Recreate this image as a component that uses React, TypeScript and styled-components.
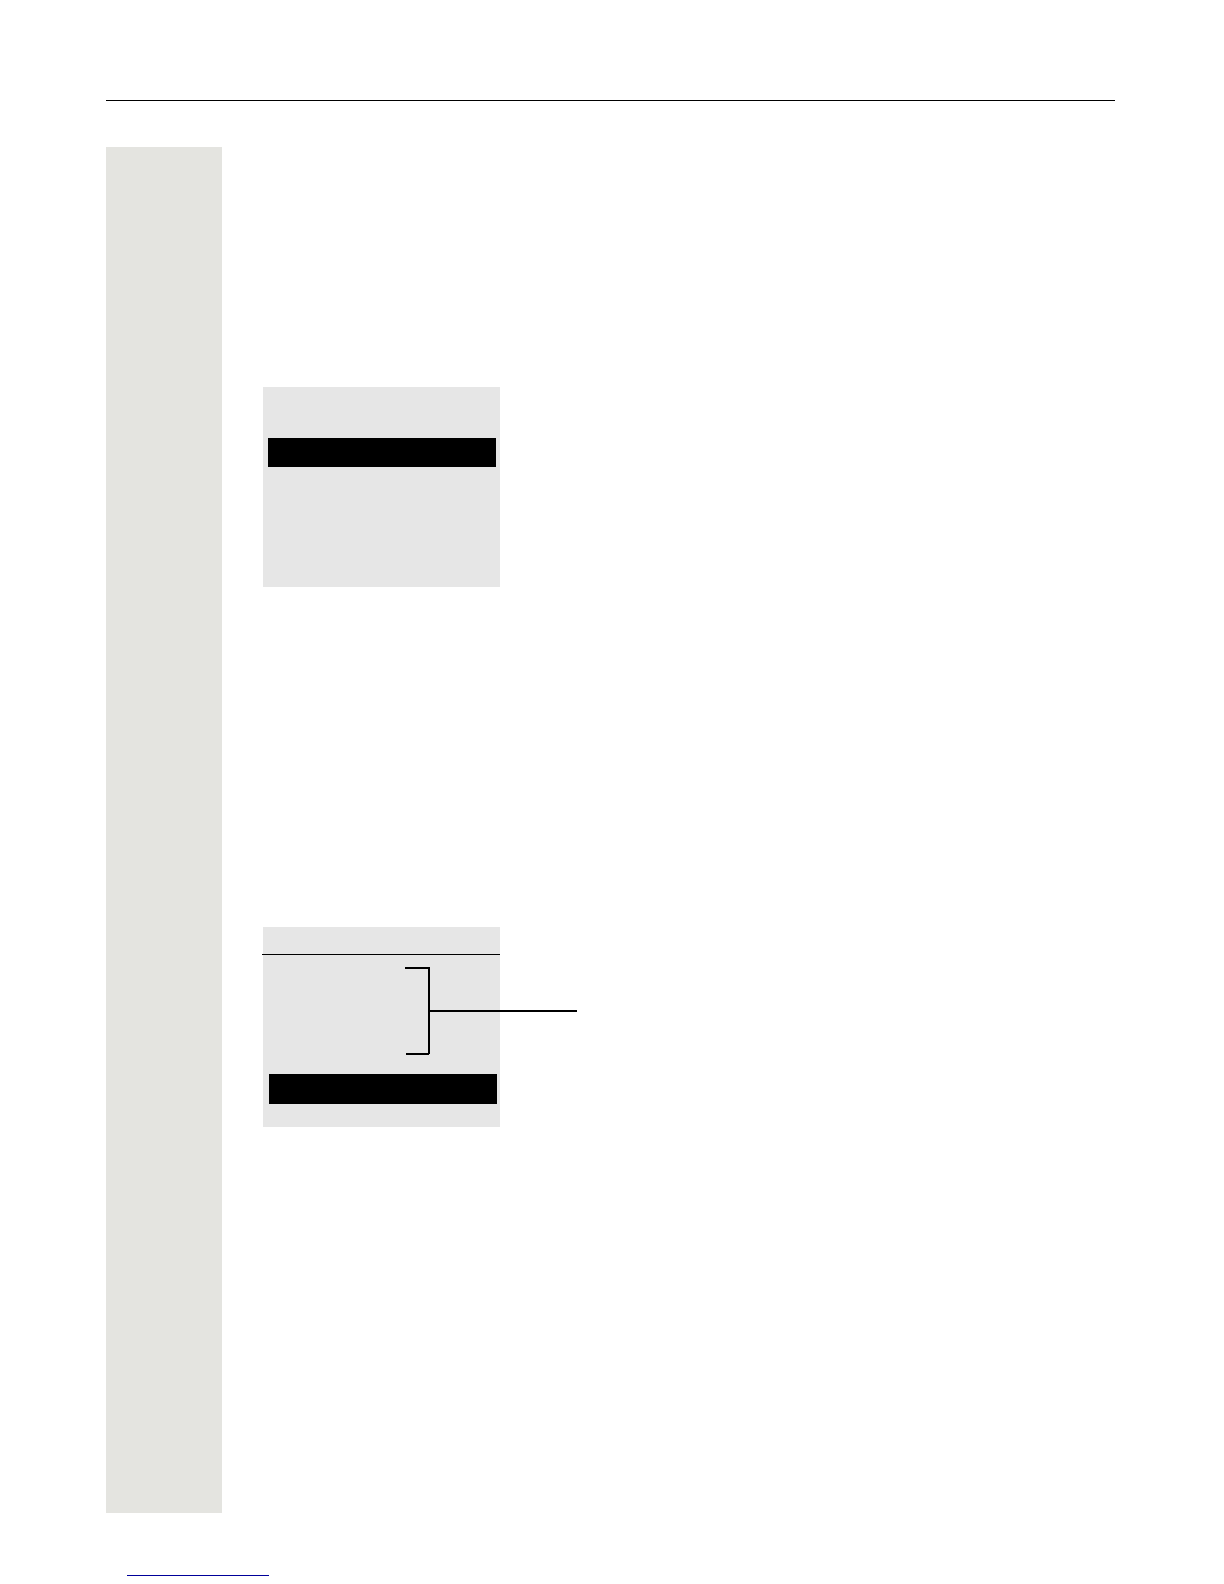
import React from "react";
import styled, { createGlobalStyle } from "styled-components";

const GlobalStyle = createGlobalStyle`
  *, *::before, *::after {
    box-sizing: border-box;
  }
  body {
    margin: 0;
    background: #ffffff;
    font-family: "Liberation Sans", Arial, sans-serif;
  }
`;

const Page = styled.div`
  display: flex;
  flex-direction: column;
  padding: 100px 109px 8px 106px;
`;

const Header = styled.header`
  border-top: 1px solid #000000;
  padding-bottom: 46px;
`;

const Body = styled.div`
  display: flex;
  gap: 41px;
`;

const Sidebar = styled.aside`
  flex: 0 0 116px;
  background: #e4e4e0;
`;

const Content = styled.main`
  flex: 1;
  min-width: 0;
  display: flex;
  flex-direction: column;
  align-items: flex-start;
  gap: 340px;
  padding: 240px 0 386px;
`;

const Screen = styled.section`
  position: relative;
  display: flex;
  flex-direction: column;
  width: 237px;
  height: 200px;
  background: #e6e6e6;
`;

const ScreenTitle = styled.div<{ $ruled?: boolean }>`
  height: ${(p) => (p.$ruled ? 28 : 51)}px;
  margin-left: ${(p) => (p.$ruled ? -1 : 0)}px;
  border-bottom: ${(p) => (p.$ruled ? "1px solid #000000" : "none")};
`;

const ScreenRows = styled.div`
  flex: 1;
`;

const SelectedRow = styled.div<{ $height: number; $inset: number }>`
  height: ${(p) => p.$height}px;
  width: 228px;
  margin-left: ${(p) => p.$inset}px;
  background: #000000;
`;

const ScreenFoot = styled.div`
  height: 23px;
`;

/* Callout that runs over the display and out past its right edge */
const Callout = styled.svg`
  position: absolute;
  top: 40px;
  left: 142px;
  display: block;
`;

const Footer = styled.footer`
  display: flex;
  padding: 47px 0 0 21px;
`;

const FooterLink = styled.a`
  width: 142px;
  height: 16px;
  border-bottom: 1px solid #00009a;
`;

export default function App() {
  return (
    <>
      <GlobalStyle />
      <Page>
        <Header />
        <Body>
          <Sidebar />
          <Content>
            <Screen>
              <ScreenTitle />
              <SelectedRow $height={29} $inset={5} />
              <ScreenRows />
            </Screen>
            <Screen>
              <ScreenTitle $ruled />
              <ScreenRows />
              <SelectedRow $height={30} $inset={6} />
              <ScreenFoot />
              <Callout width="172" height="88" viewBox="0 0 172 88" aria-hidden="true">
                <path
                  d="M0 1H24V87M1 87H24M24 44H172"
                  fill="none"
                  stroke="#000000"
                  strokeWidth="2"
                  shapeRendering="crispEdges"
                />
              </Callout>
            </Screen>
          </Content>
        </Body>
        <Footer>
          <FooterLink href="#top" />
        </Footer>
      </Page>
    </>
  );
}
